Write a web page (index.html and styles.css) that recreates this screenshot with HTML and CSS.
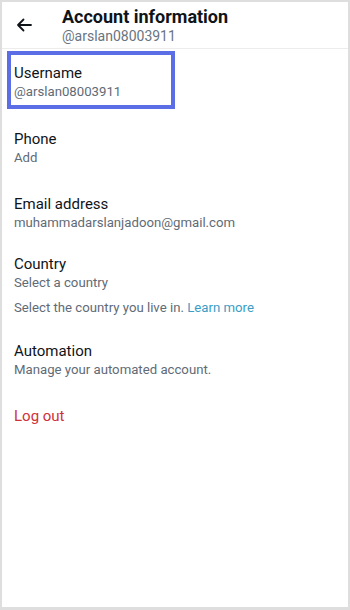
FILE: index.html
```html
<!DOCTYPE html>
<html lang="en">
<head>
<meta charset="utf-8">
<link rel="stylesheet" href="styles.css">
</head>
<body>
<div class="frame">
  <header class="header">
    <button class="back" aria-label="Back">
      <svg width="16" height="14" viewBox="0 0 16 14"><path d="M15 7H2M7.5 1.5L2 7l5.5 5.5" fill="none" stroke="#0f1419" stroke-width="1.8" stroke-linecap="round" stroke-linejoin="round"/></svg>
    </button>
    <div class="titles">
      <div class="title">Account information</div>
      <div class="subtitle">@arslan08003911</div>
    </div>
  </header>
  <div class="highlight">
    <div class="label">Username</div>
    <div class="value">@arslan08003911</div>
  </div>
  <div class="item item-phone">
    <div class="label">Phone</div>
    <div class="value">Add</div>
  </div>
  <div class="item item-email">
    <div class="label">Email address</div>
    <div class="value">muhammadarslanjadoon@gmail.com</div>
  </div>
  <div class="item item-country">
    <div class="label">Country</div>
    <div class="value">Select a country</div>
    <div class="value helper">Select the country you live in. <a class="link">Learn more</a></div>
  </div>
  <div class="item item-auto">
    <div class="label">Automation</div>
    <div class="value">Manage your automated account.</div>
  </div>
  <div class="item item-logout">
    <div class="label logout">Log out</div>
  </div>
</div>
</body>
</html>
```
FILE: styles.css
```css
* { box-sizing: border-box; }
html, body { margin: 0; padding: 0; }
body {
  width: 350px;
  height: 610px;
  font-family: Roboto, "Noto Sans", sans-serif;
  background: #ffffff;
  color: #0f1419;
}
.frame {
  width: 350px;
  height: 610px;
  border: 2px solid #dedede;
  border-bottom-width: 3px;
  background: #fff;
}
.header {
  height: 47px;
  border-bottom: 1px solid #ececec;
  display: flex;
  align-items: flex-start;
}
.back {
  border: 0;
  background: none;
  padding: 0;
  margin: 16px 0 0 14px;
  width: 18px;
  height: 14px;
  display: flex;
}
.titles {
  margin: 4px 0 0 28px;
}
.title {
  font-size: 18px;
  font-weight: 700;
  line-height: 22px;
  color: #0f1419;
}
.subtitle {
  font-size: 14px;
  line-height: 17px;
  color: #687480;
}
.label {
  font-size: 15px;
  line-height: 20px;
  color: #0f1419;
}
.value {
  font-size: 13.2px;
  line-height: 18px;
  color: #5f6b76;
}
.highlight {
  margin: 2px 0 0 5px;
  width: 168px;
  border: 4px solid #5b6ee6;
  padding: 8px 3px 4px;
}
.item {
  padding: 0 12px;
}
.item-phone { margin-top: 20px; }
.item-email { margin-top: 27px; }
.item-country { margin-top: 22px; }
.helper { margin-top: 7px; }
.item-auto { margin-top: 24px; }
.item-logout { margin-top: 27px; }
.link { color: #3a9dc6; text-decoration: none; }
.logout { color: #d0303a; }
```
